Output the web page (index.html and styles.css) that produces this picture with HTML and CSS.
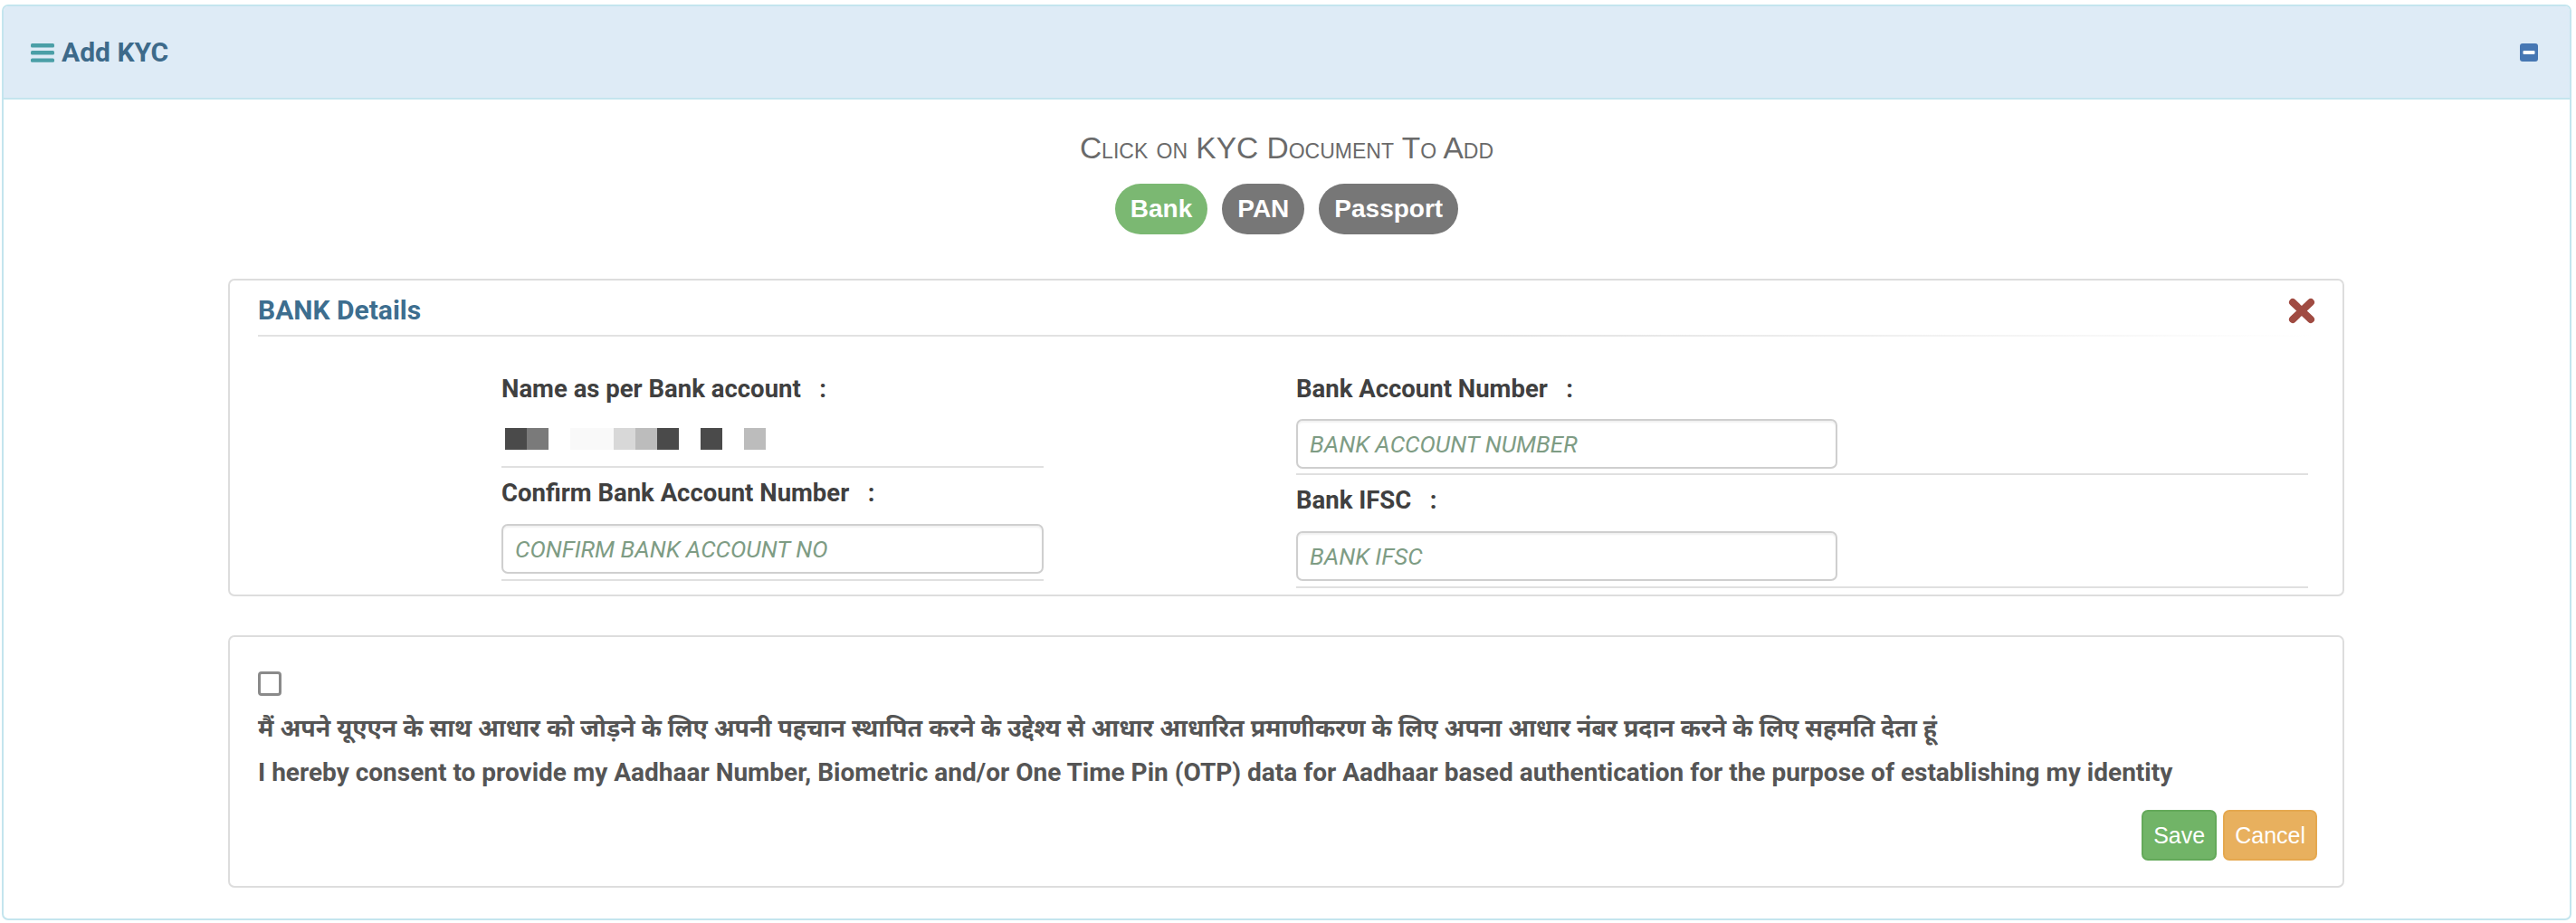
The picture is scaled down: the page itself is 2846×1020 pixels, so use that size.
FILE: index.html
```html
<!DOCTYPE html>
<html lang="en">
<head>
<meta charset="utf-8">
<title>Add KYC</title>
<link rel="stylesheet" href="styles.css">
</head>
<body>
<div class="panel">
  <div class="panel-heading">
    <div class="panel-title">
      <svg class="icon-bars" width="26" height="22" viewBox="0 0 26 22"><rect x="0" y="1" width="26" height="4.4" rx="1.5"/><rect x="0" y="9" width="26" height="4.4" rx="1.5"/><rect x="0" y="17.4" width="26" height="4.4" rx="1.5"/></svg>
      <span>Add KYC</span>
    </div>
    <svg class="icon-minus" width="20" height="20" viewBox="0 0 20 20"><rect x="0" y="0" width="20" height="20" rx="3"/><rect class="bar" x="3.5" y="8" width="13" height="4" rx="1"/></svg>
  </div>
  <div class="panel-body">
    <div class="doc-heading">Click on KYC Document To Add</div>
    <div class="doc-pills">
      <span class="pill pill-active">Bank</span>
      <span class="pill">PAN</span>
      <span class="pill">Passport</span>
    </div>

    <div class="box bank-box">
      <div class="box-title-row">
        <h3 class="box-title">BANK Details</h3>
        <svg class="icon-remove" width="30" height="29" viewBox="0 0 30 29"><path d="M5 5 L25 24 M25 5 L5 24" stroke="#a04b42" stroke-width="8" stroke-linecap="round"/></svg>
      </div>
      <div class="box-rule"></div>
      <div class="form-grid">
        <div class="form-col form-col-left">
          <div class="field field-name">
            <label class="field-label">Name as per Bank account&nbsp;&nbsp;&nbsp;:</label>
            <div class="masked">
              <i style="background:#4a4a4a"></i><i style="background:#7a7a7a"></i><i style="background:#ffffff"></i><i style="background:#f9f9f9"></i><i style="background:#f9f9f9"></i><i style="background:#d8d8d8"></i><i style="background:#bcbcbc"></i><i style="background:#4a4a4a"></i><i style="background:#ffffff"></i><i style="background:#4a4a4a"></i><i style="background:#ffffff"></i><i style="background:#bcbcbc"></i>
            </div>
          </div>
          <div class="field field-input">
            <label class="field-label">Confirm Bank Account Number&nbsp;&nbsp;&nbsp;:</label>
            <input class="text-input" type="text" placeholder="CONFIRM BANK ACCOUNT NO">
          </div>
        </div>
        <div class="form-col form-col-right">
          <div class="field field-first">
            <label class="field-label">Bank Account Number&nbsp;&nbsp;&nbsp;:</label>
            <input class="text-input" type="text" placeholder="BANK ACCOUNT NUMBER">
          </div>
          <div class="field field-input">
            <label class="field-label">Bank IFSC&nbsp;&nbsp;&nbsp;:</label>
            <input class="text-input" type="text" placeholder="BANK IFSC">
          </div>
        </div>
      </div>
    </div>

    <div class="box consent-box">
      <input class="consent-check" type="checkbox">
      <p class="consent-hi">मैं अपने यूएएन के साथ आधार को जोड़ने के लिए अपनी पहचान स्थापित करने के उद्देश्य से आधार आधारित प्रमाणीकरण के लिए अपना आधार नंबर प्रदान करने के लिए सहमति देता हूं</p>
      <p class="consent-en">I hereby consent to provide my Aadhaar Number, Biometric and/or One Time Pin (OTP) data for Aadhaar based authentication for the purpose of establishing my identity</p>
      <div class="actions">
        <button class="btn btn-save" type="button">Save</button>
        <button class="btn btn-cancel" type="button">Cancel</button>
      </div>
    </div>
  </div>
</div>
</body>
</html>
```

FILE: styles.css
```css
* { box-sizing: border-box; }

html, body {
  margin: 0;
  background: #ffffff;
}

body {
  padding: 5px 5px 3px 2px;
  font-family: Roboto, "Liberation Sans", sans-serif;
  color: #444444;
}

.panel {
  border: 2px solid #c4e5ee;
  border-radius: 7px;
  background: #ffffff;
  height: 1012px;
  overflow: hidden;
}

.panel-heading {
  height: 103px;
  background: #deebf6;
  border-bottom: 2px solid #c4e5ee;
  display: flex;
  align-items: center;
  justify-content: space-between;
  padding: 0 35px 0 30px;
}

.panel-title {
  display: flex;
  align-items: center;
  gap: 8px;
  font-weight: 700;
  font-size: 30px;
  color: #3d6a8a;
}

.icon-bars { fill: #4a9fa7; }

.icon-minus { fill: #4677b3; }
.icon-minus .bar { fill: #ffffff; }

.panel-body {
  padding: 34px 0 32px;
}

.doc-heading {
  text-align: center;
  font-family: "Liberation Sans", Arial, sans-serif;
  font-variant: small-caps;
  font-size: 33.5px;
  line-height: 40px;
  color: #6a6a6a;
}

.doc-pills {
  display: flex;
  justify-content: center;
  gap: 16px;
  margin-top: 19px;
}

.pill {
  height: 56px;
  border-radius: 28px;
  padding: 0 17px;
  display: inline-flex;
  align-items: center;
  background: #777777;
  color: #ffffff;
  font-family: "Liberation Sans", Arial, sans-serif;
  font-weight: 700;
  font-size: 28px;
}

.pill-active { background: #7bb872; }

.box {
  margin: 0 249px 0 248px;
  border: 2px solid #dddddd;
  border-radius: 7px;
}

.bank-box {
  margin-top: 49px;
  padding: 15px 30px 7px 31px;
}

.box-title-row {
  display: flex;
  align-items: center;
  justify-content: space-between;
}

.box-title {
  margin: 0;
  font-size: 30px;
  line-height: 36px;
  font-weight: 700;
  color: #3d6e8f;
}

.box-rule {
  height: 2px;
  margin-top: 9px;
  background: linear-gradient(to right, #e2e2e2 0%, #e2e2e2 60%, rgba(226,226,226,0) 100%);
}

.form-grid {
  display: grid;
  grid-template-columns: 599px 1118px;
  column-gap: 279px;
  margin-left: 269px;
  padding-top: 39px;
}

.field {
  border-bottom: 2px solid #e0e0e0;
}

.field-label {
  display: block;
  font-size: 27.5px;
  line-height: 37px;
  font-weight: 700;
  color: #404040;
}

.field-name { padding-bottom: 18px; }

.masked {
  display: flex;
  margin-top: 25px;
  margin-left: 4px;
  height: 24px;
}

.masked i {
  display: block;
  width: 24px;
  height: 24px;
}

.field-input {
  margin-top: 9px;
  padding-bottom: 6px;
}

.field-input .text-input { margin-top: 16px; }

.field-first { padding-bottom: 5px; }
.field-first .text-input { margin-top: 15px; }

.text-input {
  display: block;
  width: 599px;
  height: 55px;
  border: 2px solid #cfcfcf;
  border-radius: 7px;
  box-shadow: inset 0 2px 2px rgba(0,0,0,0.06);
  padding: 0 13px;
  font-family: Roboto, "Liberation Sans", sans-serif;
  font-size: 26px;
  font-style: italic;
  color: #555555;
  background: #ffffff;
  outline: none;
}

.form-col-right .text-input { width: 598px; }

.text-input::placeholder {
  color: #7e9c84;
  font-style: italic;
}

.consent-box {
  margin-top: 43px;
  padding: 38px 28px 28px 31px;
}

.consent-check {
  appearance: none;
  -webkit-appearance: none;
  display: block;
  margin: 0;
  width: 26px;
  height: 27px;
  border: 3px solid #8a8a8a;
  border-radius: 4px;
  background: #ffffff;
}

.consent-hi {
  margin: 19px 0 0;
  font-family: "Noto Sans Devanagari", "Lohit Devanagari", "Noto Sans", Roboto, sans-serif;
  font-weight: 700;
  font-size: 26.8px;
  line-height: 40px;
  color: #555555;
}

.consent-en {
  margin: 6px 0 0;
  font-weight: 700;
  font-size: 28px;
  line-height: 40px;
  color: #555555;
}

.actions {
  display: flex;
  justify-content: flex-end;
  gap: 7px;
  margin-top: 21px;
}

.btn {
  height: 56px;
  padding: 0 11px;
  border-radius: 7px;
  font-family: "Liberation Sans", Arial, sans-serif;
  font-size: 25px;
  color: #ffffff;
  cursor: pointer;
}

.btn-save {
  background: #71b467;
  border: 2px solid #64a95a;
}

.btn-cancel {
  background: #e8b05e;
  border: 2px solid #e5a84f;
}
```
